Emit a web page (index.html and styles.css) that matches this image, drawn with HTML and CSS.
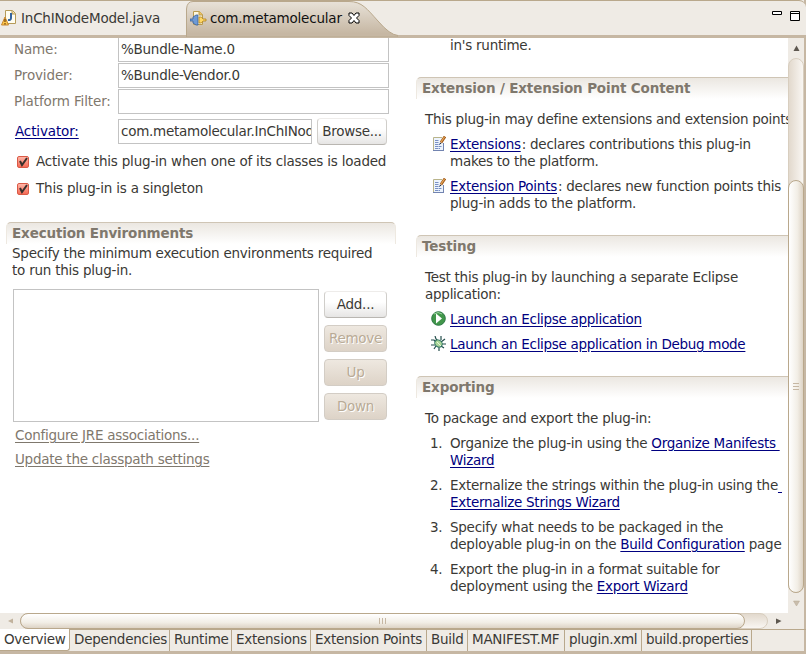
FILE: index.html
```html
<!DOCTYPE html>
<html lang="en">
<head>
<meta charset="utf-8">
<title>Plug-in Manifest Editor</title>
<link rel="stylesheet" href="styles.css">
</head>
<body>
<svg class="defs" width="0" height="0">
  <symbol id="edit" viewBox="0 0 13 15">
    <path d="M.5 1.5h8.500M.5 1.500V14" stroke="#b9b48b" fill="none"/>
    <path d="M1 2h9v12H1z" fill="#edf4fd"/>
    <path d="M0 14.500h11M10.500 7v7" stroke="#7284b0" fill="none"/>
    <path d="M2 4.500h4M2 6.500h4M2 8.500h5M2 10.500h7M2 12.500h5" stroke="#7890c4" stroke-dasharray="3 .5"/>
    <path d="M8 6.500l4-6" stroke="#a35c18" stroke-width="2.800"/>
    <path d="M8 6l3.500-5" stroke="#e8a75d" stroke-width="1.200"/>
    <path d="M6.500 8.500l.5-2 1.500 1z" fill="#222"/>
  </symbol>
</svg>
<div class="editor">
  <header class="tabs">
    <div class="tab java">
      <svg width="17" height="18" viewBox="0 0 17 18"><path d="M4.500 1.500h7l3 3v10h-10z" fill="#fffdf0" stroke="#b59a58"/><path d="M11 2v3h3" fill="#ecd48a" stroke="#b59a58"/><path d="M10 4v5q0 2.500-3 2" fill="none" stroke="#34649f" stroke-width="2"/><path d="M4 8l3.500 8H.5z" fill="#ffc84b" stroke="#c7862c"/><path d="M4 10v3m0 1v1.500" stroke="#6b3d08" stroke-width="1.200"/></svg>
      <span class="t-java">InChINodeModel.java</span>
    </div>
    <div class="tab active">
      <svg class="shape" width="212" height="36" viewBox="0 0 212 36"><defs><linearGradient id="g" x2="0" y2="1"><stop offset="0" stop-color="#e8e2d8"/><stop offset=".9" stop-color="#c6b7a3"/></linearGradient></defs><path d="M.5 36V8Q1 .5 7 .5H163C176 .5 181 8 192 20Q204 34 212 34.500V36z" fill="url(#g)" stroke="#b9a88c"/></svg>
      <svg width="17" height="17" viewBox="0 0 17 17"><path d="M3.500 1.500h6l3 3v10h-9z" fill="#fff8df" stroke="#b89b50"/><path d="M9 1v4h4" fill="#edc361" stroke="#b89b50"/><path d="M0 9h3V7l3-2h2v10H6l-3-2v-2H0z" fill="#6e9ad5" stroke="#37609b" stroke-width=".8"/><path d="M9 7h2.500l1.500 2h3v2h-3l-1.500 2H9z" fill="#ffd766" stroke="#af801d" stroke-width=".8"/></svg>
      <span class="t-com">com.metamolecular</span>
      <svg class="close" width="12" height="12" viewBox="0 0 12 12"><path d="M1 1h3l2 2.500L8 1h3v2.500L8.500 6 11 8.500V11H8L6 8.500 4 11H1V8.500L3.500 6 1 3.500z" fill="#fff" stroke="#000"/></svg>
    </div>
    <svg class="winbtns" width="29" height="11" viewBox="0 0 29 11"><path d="M.5.500h9v3h-9zM18.500.500h9v9h-9zM18.500 2.500h9" fill="#fff" stroke="#000"/></svg>
  </header>
  <div class="middle">
    <main class="form">
      <div class="left">
        <div class="field name"><label>Name:</label><div class="input"><span>%Bundle-Name.0</span></div></div>
        <div class="field"><label>Provider:</label><div class="input"><span>%Bundle-Vendor.0</span></div></div>
        <div class="field"><label>Platform Filter:</label><div class="input"></div></div>
        <div class="field activator"><label><a>Activator:</a></label><div class="input"><span>com.metamolecular.InChINod</span></div><button class="browse">Browse...</button></div>
        <div class="check"><i><svg width="12" height="12" viewBox="0 0 12 12"><path d="M3 5l2 4 5-7" fill="none" stroke="#39302c" stroke-width="2"/></svg></i>Activate this plug-in when one of its classes is loaded</div>
        <div class="check second"><i><svg width="12" height="12" viewBox="0 0 12 12"><path d="M3 5l2 4 5-7" fill="none" stroke="#39302c" stroke-width="2"/></svg></i>This plug-in is a singleton</div>
        <section>
          <h2>Execution Environments</h2>
          <p class="spec">Specify the minimum execution environments required<br>to run this plug-in.</p>
          <div class="envs"><div class="list"></div><div class="btns"><button>Add...</button><button disabled>Remove</button><button disabled>Up</button><button disabled>Down</button></div></div>
          <p class="grey"><a>Configure JRE associations...</a></p>
          <p class="grey"><a>Update the classpath settings</a></p>
        </section>
      </div>
      <div class="right">
        <p class="runtime">in's runtime.</p>
        <section class="ext"><h2>Extension / Extension Point Content</h2>
          <p class="intro">This plug-in may define extensions and extension points</p>
          <div class="item pen"><b><svg width="13" height="15"><use href="#edit"/></svg></b><p><a>Extensions</a><span class="colon">:</span> declares contributions this plug-in<br>makes to the platform.</p></div>
          <div class="item pen"><b><svg width="13" height="15"><use href="#edit"/></svg></b><p><a>Extension Points</a><span class="colon">:</span> declares new function points this<br>plug-in adds to the platform.</p></div>
        </section>
        <section class="test"><h2>Testing</h2>
          <p class="intro">Test this plug-in by launching a separate Eclipse<br>application:</p>
          <div class="item run"><b><svg width="15" height="15" viewBox="0 0 15 15"><circle cx="7.500" cy="7.500" r="6.800" fill="#41964a" stroke="#2b7744"/><path d="M3 3q4-3 8 0" stroke="#9bd49d" fill="none"/><path d="M5 2.500v10l6-5z" fill="#fff"/></svg></b><p><a>Launch an Eclipse application</a></p></div>
          <div class="item run"><b><svg width="15" height="15" viewBox="0 0 15 15"><path d="M0 4h3l2 2M4 0l1 3 2 2M10 0v4M14 3l-4 3M15 8h-4M13 12l-3-2M8 15v-4M3 13l2-3M0 9h4" stroke="#234d4b" stroke-width="1.200" fill="none"/><ellipse cx="7.500" cy="7.500" rx="4" ry="3.300" transform="rotate(40 7.500 7.500)" fill="#a9d598" stroke="#287060"/><path d="M6 6l4 4" stroke="#e7f8d7"/></svg></b><p><a>Launch an Eclipse application in Debug mode</a></p></div>
        </section>
        <section class="export"><h2>Exporting</h2>
          <p class="intro">To package and export the plug-in:</p>
          <div class="item"><b>1.</b><p>Organize the plug-in using the <a>Organize Manifests&nbsp;<br>Wizard</a></p></div>
          <div class="item"><b>2.</b><p>Externalize the strings within the plug-in using the<a>&nbsp;<br>Externalize Strings Wizard</a></p></div>
          <div class="item"><b>3.</b><p>Specify what needs to be packaged in the<br>deployable plug-in on the <a>Build Configuration</a> page</p></div>
          <div class="item"><b>4.</b><p>Export the plug-in in a format suitable for<br>deployment using the <a>Export Wizard</a></p></div>
        </section>
      </div>
    </main>
    <div class="vbar"><svg width="15" height="20" viewBox="0 0 15 20"><path d="M5.500 13h6l-3-5.500z" fill="#5d574f"/></svg><div class="vtrack"><div class="vthumb"><i></i><i></i><i></i></div></div><svg width="15" height="20" viewBox="0 0 15 20"><path d="M5.500 8h6l-3 5z" fill="#c9bdac" stroke="#b6a993" stroke-width=".5"/></svg></div>
  </div>
  <div class="hbar"><svg width="20" height="16" viewBox="0 0 20 16"><path d="M13 5.500v5L8 8z" fill="#c1b29d"/></svg><div class="htrack"><div class="hthumb"><i></i><i></i><i></i></div></div><svg width="36" height="16" viewBox="0 0 36 16"><path d="M8 5.500v5.500L13.500 8z" fill="#5d574f"/></svg></div>
  <footer><span class="w1 on">Overview</span><span class="w2">Dependencies</span><span class="w3">Runtime</span><span class="w4">Extensions</span><span class="w5">Extension Points</span><span class="w6">Build</span><span class="w7">MANIFEST.MF</span><span class="w8">plugin.xml</span><span class="w9">build.properties</span></footer>
</div>
</body>
</html>
```
FILE: styles.css
```css
* { box-sizing: border-box; }
body { margin: 0; width: 806px; height: 654px; overflow: hidden; font: 13.5px/17px "DejaVu Sans", sans-serif; letter-spacing: -.26px; color: #3a3935; background: #efebe5; }
p, h2 { margin: 0; white-space: nowrap; }
a { color: #000080; text-decoration: underline; text-underline-offset: 2px; }
svg { display: block; flex: none; }
.defs { position: absolute; }
.editor { width: 806px; height: 654px; display: flex; flex-direction: column; border-right: 2px solid #c6b7a3; }
.tabs { height: 38px; flex: none; display: flex; border-top: 1px solid #b9a88c; border-bottom: 3px solid #c6b7a3; background: #efebe5; margin-right: -2px; border-top-right-radius: 7px; }
.tab { display: flex; align-items: center; height: 34px; position: relative; white-space: nowrap; }
.java { width: 186px; gap: 3px; padding-left: 1px; }
.active { width: 212px; padding-left: 4px; gap: 3px; color: #111; }
.active > * { position: relative; }
.active .shape { position: absolute; left: 0; top: 0; }
.t-java, .t-com { letter-spacing: -.2px; }
.close { margin-left: 3px; }
.winbtns { margin: 10px 5px 0 auto; }
.middle { height: 575px; flex: none; display: flex; }
.form { width: 788px; height: 575px; background: #fff; overflow: hidden; display: flex; }
.left { width: 416px; flex: none; padding-left: 6px; }
.right { width: 372px; flex: none; }
.field { display: flex; height: 26px; align-items: center; width: 384px; padding-left: 8px; color: #7f786d; }
.field label { width: 104px; flex: none; white-space: nowrap; letter-spacing: -.14px; }
.input { width: 271px; height: 25px; border: 1px solid #c3c3c3; background: #fff; color: #3a3935; padding: 3px 2px; overflow: hidden; white-space: nowrap; flex: none; }
.name { margin-top: -2px; }
.activator { margin-top: 4px; padding-left: 9px; }
.activator label { width: 103px; }
.activator .input { width: 194px; }
button { font: inherit; letter-spacing: inherit; color: #3a3935; padding: 0; height: 27px; border: 1px solid #d0ceca; border-top-color: #eeecea; border-bottom-color: #b9b6b1; border-radius: 4px; background: linear-gradient(#fff 40%, #e6e5e4); }
.browse { width: 70px; margin-left: 5px; }
.check { display: flex; align-items: center; height: 17px; margin-top: 9px; padding-left: 11px; gap: 7px; white-space: nowrap; letter-spacing: -.2px; }
.check.second { margin-top: 10px; }
.check i { width: 12px; height: 12px; border: 1px solid #da5a46; border-radius: 2px; background: linear-gradient(#ffb5a7, #f56b56); }
.check i svg { margin: -1px; }
section { position: relative; }
h2 { height: 22px; padding: 2px 5px; font: bold 13.5px/17px "DejaVu Sans", sans-serif; letter-spacing: -.15px; color: #7f786d; border-top: 1px solid #cfc5b5; border-left: 1px solid #eee9e1; border-radius: 5px 0 0; background: linear-gradient(#ebe7e1, #fff); }
.left section { margin-top: 25px; width: 390px; }
.left h2 { border-right: 1px solid #eee9e1; border-radius: 5px 5px 0 0; }
.spec { padding-left: 6px; margin-top: 1px; letter-spacing: -.23px; }
.envs { display: flex; margin: 10px 0 5px 7px; gap: 5px; }
.list { width: 306px; height: 133px; border: 1px solid #c3c3c3; }
.btns { display: flex; flex-direction: column; gap: 7px; padding-top: 2px; }
.btns button { width: 63px; }
button:disabled { color: #b9ab96; text-shadow: 1px 1px #fff; background: linear-gradient(#eee8e0, #ddd3c7); border: 1px solid #d3cdc5; }
.grey { padding-left: 9px; height: 24px; }
.grey a { color: #7f786d; }
.runtime { padding-left: 34px; margin-top: -1px; height: 17px; }
.ext, .test, .export { margin-top: 23px; }
.intro { padding-left: 9px; margin-top: 12px; }
.item { display: flex; margin-top: 8px; }
.item b { font-weight: normal; width: 34px; padding-left: 14px; flex: none; }
.item.pen b { padding-left: 17px; }
.item.run b { padding-left: 15px; }
.item.run a { letter-spacing: -.3px; }
.export .item a { letter-spacing: -.28px; }
.colon { margin-left: 1px; }
.vbar { width: 16px; background: #efebe5; }
.vtrack { height: 535px; width: 16px; padding-top: 121px; border: 1px solid #d8cebf; border-radius: 8px; background: linear-gradient(90deg, #e2d9cd, #f9f6f2); }
.vthumb { margin-left: -1px; width: 16px; height: 413px; border: 1px solid #b9a88c; border-radius: 8px; background: linear-gradient(90deg, #fff, #f2eee6 60%, #ddd3c5); display: flex; flex-direction: column; align-items: center; justify-content: center; gap: 2px; }
.vthumb i { width: 6px; height: 1px; background: #c6b7a3; }
.hbar { display: flex; height: 16px; flex: none; }
.htrack { width: 748px; border: 1px solid #d8cebf; border-radius: 8px; background: linear-gradient(#e2d9cd, #f9f6f2); }
.hthumb { margin: -1px; width: 725px; height: 16px; border: 1px solid #b9a88c; border-radius: 8px; background: linear-gradient(#fff, #f2eee6 60%, #ddd3c5); display: flex; align-items: center; justify-content: center; gap: 2px; }
.hthumb i { width: 1px; height: 6px; background: #c6b7a3; }
footer { display: flex; height: 25px; flex: none; border-top: 1px solid #b9a88c; border-bottom: 3px solid #c6b7a3; margin-right: -2px; }
footer span { border-right: 1px solid #b9a88c; padding: 1px 0 0 4px; white-space: nowrap; }
.on { background: #fff; margin-top: -1px; padding-top: 2px; border-bottom: 1px solid #b9a88c; border-bottom-right-radius: 3px; }
.w1 { width: 70px; } .w2 { width: 100px; } .w3 { width: 62px; } .w4 { width: 79px; } .w5 { width: 116px; } .w6 { width: 41px; } .w7 { width: 97px; } .w8 { width: 77px; } .w9 { width: 110px; }
```
